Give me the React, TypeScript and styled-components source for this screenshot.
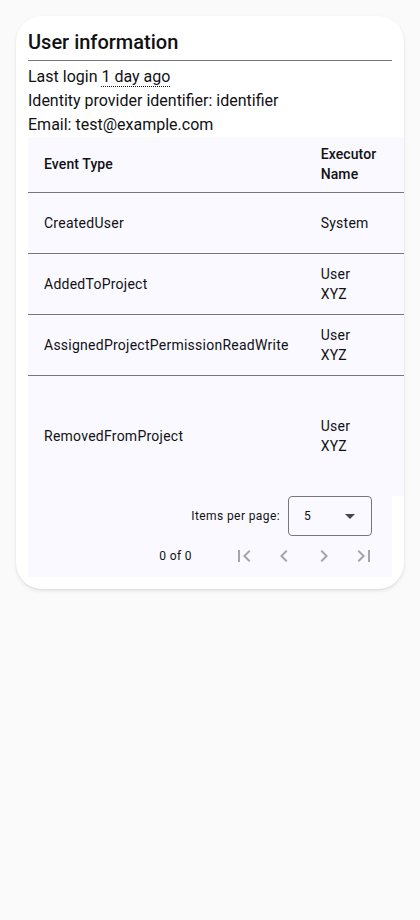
import React from 'react';
import styled, { createGlobalStyle } from 'styled-components';

type EventRow = {
	type: string;
	executor: string;
	tall?: boolean;
};

const events: EventRow[] = [
	{ type: 'CreatedUser', executor: 'System' },
	{ type: 'AddedToProject', executor: 'User XYZ' },
	{ type: 'AssignedProjectPermissionReadWrite', executor: 'User XYZ' },
	{ type: 'RemovedFromProject', executor: 'User XYZ', tall: true },
];

const Icon: React.FC<{ d: string }> = ({ d }) => (
	<svg width="24" height="24" viewBox="0 0 24 24" fill="currentColor">
		<path d={d} />
	</svg>
);

const icons = {
	first: 'M18.41 16.59L13.82 12l4.59-4.59L17 6l-6 6 6 6zM6 6h2v12H6z',
	prev: 'M15.41 7.41L14 6l-6 6 6 6 1.41-1.41L10.83 12z',
	next: 'M10 6L8.59 7.41 13.17 12l-4.58 4.59L10 18l6-6z',
	last: 'M5.59 7.41L10.18 12l-4.59 4.59L7 18l6-6-6-6zM16 6h2v12h-2z',
};

const App: React.FC = () => {
	return (
		<>
			<GlobalStyle />
			<Card>
				<Title>User information</Title>
				<InfoLine>
					Last login <Relative title="2024-01-01">1 day ago</Relative>
				</InfoLine>
				<InfoLine>Identity provider identifier: identifier</InfoLine>
				<InfoLine>Email: test@example.com</InfoLine>
				<TableWrap>
					<Table>
						<thead>
							<tr>
								<HeadCell>Event Type</HeadCell>
								<HeadCell narrow>Executor Name</HeadCell>
							</tr>
						</thead>
						<tbody>
							{events.map((event) => (
								<Row key={event.type} tall={event.tall}>
									<Cell>{event.type}</Cell>
									<Cell narrow>{event.executor}</Cell>
								</Row>
							))}
						</tbody>
					</Table>
				</TableWrap>
				<Paginator>
					<PageSizeRow>
						<PageLabel>Items per page:</PageLabel>
						<Select>
							<span>5</span>
							<Arrow />
						</Select>
					</PageSizeRow>
					<RangeRow>
						<PageLabel>0 of 0</PageLabel>
						<NavButtons>
							<NavButton disabled aria-label="First page">
								<Icon d={icons.first} />
							</NavButton>
							<NavButton disabled aria-label="Previous page">
								<Icon d={icons.prev} />
							</NavButton>
							<NavButton disabled aria-label="Next page">
								<Icon d={icons.next} />
							</NavButton>
							<NavButton disabled aria-label="Last page">
								<Icon d={icons.last} />
							</NavButton>
						</NavButtons>
					</RangeRow>
				</Paginator>
			</Card>
		</>
	);
};
export default App;

const GlobalStyle = createGlobalStyle`
	html, body {
		margin: 0;
		padding: 0;
		background: #fafafa;
		font-family: Roboto, "Liberation Sans", sans-serif;
		color: #111114;
	}
	* {
		box-sizing: border-box;
	}
`;

const Card = styled.div`
	margin: 16px;
	width: 388px;
	background: #ffffff;
	border-radius: 26px;
	padding: 12px 12px 12px 12px;
	box-shadow: 0 2px 4px rgba(0, 0, 0, 0.08), 0 1px 2px rgba(0, 0, 0, 0.06);
	overflow: hidden;
`;

const Title = styled.h2`
	margin: 0;
	font-size: 20px;
	font-weight: 500;
	line-height: 28px;
	padding-bottom: 4px;
	border-bottom: 1px solid #77767d;
	margin-bottom: 4px;
`;

const InfoLine = styled.div`
	font-size: 16px;
	line-height: 24px;
`;

const Relative = styled.span`
	border-bottom: 1px dotted #111114;
`;

const TableWrap = styled.div`
	margin-right: -12px;
	background: #f9f9ff;
`;

const Table = styled.table`
	width: 100%;
	border-collapse: collapse;
	border-spacing: 0;
	font-size: 14px;
	line-height: 20px;
`;

const HeadCell = styled.th<{ narrow?: boolean }>`
	height: 55px;
	text-align: left;
	font-weight: 500;
	letter-spacing: 0.1px;
	padding: 0 ${(p) => (p.narrow ? '28px' : '16px')} 0 16px;
	width: ${(p) => (p.narrow ? '1px' : 'auto')};
	border-bottom: 1px solid #77767d;
	vertical-align: middle;
`;

const Row = styled.tr<{ tall?: boolean }>`
	height: ${(p) => (p.tall ? '121px' : '61px')};
	& > td {
		border-bottom: ${(p) => (p.tall ? 'none' : '1px solid #77767d')};
	}
`;

const Cell = styled.td<{ narrow?: boolean }>`
	padding: 0 ${(p) => (p.narrow ? '28px' : '16px')} 0 16px;
	width: ${(p) => (p.narrow ? '1px' : 'auto')};
	letter-spacing: 0.25px;
	vertical-align: middle;
`;

const Paginator = styled.div`
	background: #f9f9ff;
	display: flex;
	flex-direction: column;
	align-items: flex-end;
	padding-bottom: 1px;
	font-size: 12px;
`;

const PageSizeRow = styled.div`
	display: flex;
	align-items: center;
	gap: 8px;
	height: 40px;
	padding-right: 20px;
`;

const PageLabel = styled.span`
	font-size: 12px;
	line-height: 16px;
	letter-spacing: 0.4px;
`;

const Select = styled.div`
	width: 84px;
	height: 40px;
	border: 1px solid #77767d;
	border-radius: 4px;
	display: flex;
	align-items: center;
	justify-content: space-between;
	padding: 0 16px 0 15px;
	font-size: 12px;
	letter-spacing: 0.4px;
`;

const Arrow = styled.span`
	width: 0;
	height: 0;
	border-left: 5px solid transparent;
	border-right: 5px solid transparent;
	border-top: 5px solid #46464f;
`;

const RangeRow = styled.div`
	display: flex;
	align-items: center;
	gap: 32px;
	height: 40px;
	padding-right: 8px;
`;

const NavButtons = styled.div`
	display: flex;
`;

const NavButton = styled.button`
	width: 40px;
	height: 40px;
	border: none;
	background: transparent;
	padding: 0;
	display: flex;
	align-items: center;
	justify-content: center;
	color: rgba(27, 27, 31, 0.38);
	cursor: default;
`;
